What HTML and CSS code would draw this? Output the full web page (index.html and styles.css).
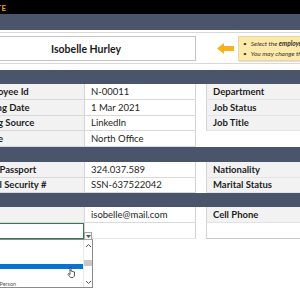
FILE: index.html
```html
<!DOCTYPE html>
<html>
<head>
<meta charset="utf-8">
<link rel="stylesheet" href="styles.css">
</head>
<body>
<div class="sheet">
  <div class="titlebar"><div class="title-wrap"><span class="title">EMPLOYEE PROFILE UPDATE</span></div></div>
  <div class="band band-1"></div>
  <div class="name-section">
    <div class="rule"></div>
    <div class="name-row">
      <div class="name-box">Isobelle Hurley</div>
      <svg class="arrow" width="17" height="11" viewBox="0 0 17 11"><path d="M0 5.5 L7 0 L7 3 L17 3 L17 8 L7 8 L7 11 Z" fill="#f7b21c"/></svg>
      <div class="note">
        <div class="note-line"><span class="bullet">•</span><span>Select the <b>employee</b> name from the list</span></div>
        <div class="note-line"><span class="bullet">•</span><span>You may change the details</span></div>
      </div>
    </div>
    <div class="rule rule-bottom"></div>
  </div>
  <div class="band band-2"></div>
  <div class="grid g1">
    <div class="lbl">Employee Id</div><div class="val">N-00011</div><div></div><div class="rlbl">Department</div>
    <div class="lbl">Joining Date</div><div class="val">1 Mar 2021</div><div></div><div class="rlbl">Job Status</div>
    <div class="lbl">Hiring Source</div><div class="val">LinkedIn</div><div></div><div class="rlbl">Job Title</div>
    <div class="lbl">Office</div><div class="val">North Office</div><div></div><div></div>
  </div>
  <div class="band band-3"></div>
  <div class="grid g2">
    <div class="lbl">Visa/Passport</div><div class="val">324.037.589</div><div></div><div class="rlbl">Nationality</div>
    <div class="lbl">Social Security #</div><div class="val">SSN-637522042</div><div></div><div class="rlbl">Marital Status</div>
  </div>
  <div class="band band-4"></div>
  <div class="grid g3">
    <div class="lbl">Email</div><div class="val">isobelle@mail.com</div><div></div><div class="rlbl">Cell Phone</div>
    <div class="sel">
      <div class="dd-btn"><svg width="5" height="3" viewBox="0 0 5 3"><path d="M0 0 H5 L2.5 3 Z" fill="#555"/></svg></div>
      <div class="dropdown">
        <div class="dd-items">
          <div class="item"></div>
          <div class="item"></div>
          <div class="item"></div>
          <div class="item active"></div>
          <div class="item"></div>
          <div class="item text">Contact Person</div>
        </div>
        <div class="scroll">
          <svg width="7" height="5" viewBox="0 0 7 5"><path d="M1 4 L3.5 1.5 L6 4" fill="none" stroke="#555" stroke-width="1"/></svg>
          <div class="thumb"></div>
          <svg width="7" height="5" viewBox="0 0 7 5"><path d="M1 1 L3.5 3.5 L6 1" fill="none" stroke="#555" stroke-width="1"/></svg>
        </div>
        <svg class="cursor" width="9" height="11" viewBox="0 0 9 11"><path d="M3 0.5 L4 0.5 L4 4 L7.5 5 L7.5 9 L6 10.5 L3.5 10.5 L1 7.5 L1.5 6.5 L3 7.5 Z" fill="#fff" stroke="#333" stroke-width="0.8"/></svg>
      </div>
    </div>
    <div class="val blank"></div><div></div><div class="rlbl blank"></div>
  </div>
</div>
</body>
</html>
```

FILE: styles.css
```css
html, body {
  margin: 0;
  padding: 0;
}
body {
  width: 300px;
  height: 300px;
  overflow: hidden;
  background: #fff;
  font-family: Lato, "Liberation Sans", sans-serif;
  color: #1e1e1e;
}
.sheet {
  margin-left: -40px;
  width: 340px;
  position: relative;
}
.titlebar {
  height: 14px;
  background: #000;
}
.title-wrap {
  width: 46px;
  height: 14px;
  display: flex;
  justify-content: flex-end;
  align-items: center;
  padding-top: 2px;
  box-sizing: border-box;
}
.title {
  white-space: nowrap;
  color: #e3a52b;
  font-weight: 700;
  font-size: 8px;
}
.band {
  background: #4a546a;
}
.band-1 { height: 16px; }
.band-2 { height: 14px; }
.band-3 { height: 15px; }
.band-4 { height: 14px; }
.name-section {
  height: 40px;
  padding-top: 2px;
  box-sizing: border-box;
}
.rule {
  height: 1px;
  background: #d8d8d8;
}
.rule-bottom {
  margin-top: 2px;
}
.name-row {
  display: flex;
  align-items: center;
  margin-top: 3px;
  height: 25px;
}
.name-box {
  flex: none;
  margin-left: 14px;
  width: 222px;
  height: 25px;
  box-sizing: border-box;
  border: 1px solid #c4c4c4;
  display: flex;
  justify-content: center;
  align-items: center;
  font-weight: 700;
  font-size: 10.5px;
  color: #1a1a1a;
  padding-left: 2px;
}
.arrow {
  margin-left: 21px;
  flex: none;
}
.note {
  margin-left: 4px;
  width: 120px;
  height: 25px;
  flex: none;
  box-sizing: border-box;
  background: #fdeaaa;
  border: 1px solid #e6d7a8;
  box-shadow: 1px 1px 1px rgba(0,0,0,0.12);
  display: flex;
  flex-direction: column;
  justify-content: center;
  gap: 3px;
  padding-left: 4px;
  font-size: 6.5px;
  font-style: italic;
  color: #333;
  white-space: nowrap;
}
.note-line {
  display: flex;
  gap: 4px;
}
.bullet {
  font-style: normal;
}
.grid {
  display: grid;
  grid-template-columns: 124px 112px 10px 94px;
  font-size: 9.5px;
}
.g1 { grid-auto-rows: 15.75px; }
.g2 { grid-auto-rows: 15.5px; }
.g3 { grid-auto-rows: 16px; }
.lbl {
  background: #f2f2f2;
  border-bottom: 1px solid #d9d9d9;
  font-weight: 700;
  padding-left: 17px;
  display: flex;
  align-items: center;
  white-space: nowrap;
  overflow: hidden;
}
.val {
  border-left: 1px solid #d4d4d4;
  border-right: 1px solid #d4d4d4;
  border-bottom: 1px solid #d9d9d9;
  padding-left: 6px;
  display: flex;
  align-items: center;
  white-space: nowrap;
}
.rlbl {
  background: #f2f2f2;
  border-left: 1px solid #d4d4d4;
  border-bottom: 1px solid #e4e4e4;
  padding-left: 6px;
  font-weight: 700;
  display: flex;
  align-items: center;
  white-space: nowrap;
}
.rlbl.blank {
  background: #fff;
  border-bottom: 1px solid #c8c8c8;
}
.val.blank {
  border-bottom: 1px solid #e8e8e8;
}
.sel {
  position: relative;
  border: 1px solid #2f7d4f;
  background: #fff;
}
.dd-btn {
  position: absolute;
  right: -9px;
  bottom: -2px;
  width: 8px;
  height: 8px;
  box-sizing: border-box;
  border: 1px solid #a6a6a6;
  background: #f4f4f4;
  display: flex;
  justify-content: center;
  align-items: center;
  z-index: 2;
}
.dropdown {
  position: absolute;
  left: -1px;
  top: 15px;
  width: 133px;
  height: 49px;
  box-sizing: border-box;
  border: 1px solid #8c8c8c;
  background: #fff;
  display: flex;
  z-index: 1;
}
.dd-items {
  flex: 1;
  display: flex;
  flex-direction: column;
  padding-top: 3px;
}
.item {
  height: 6.5px;
}
.item.active {
  background: #0a72d4;
  height: 6px;
  margin-top: 3px;
}
.item.text {
  margin-top: 6px;
  padding-left: 18px;
  font-size: 5.5px;
  color: #555;
  line-height: 6px;
  white-space: nowrap;
}
.scroll {
  width: 9px;
  border-left: 1px solid #eaeaea;
  display: flex;
  flex-direction: column;
  align-items: center;
  padding: 3px 0 2px;
  box-sizing: border-box;
}
.thumb {
  width: 8px;
  height: 6px;
  background: #c8c8c8;
  margin-top: 12px;
  margin-bottom: auto;
}
.cursor {
  position: absolute;
  left: 106px;
  top: 27px;
}
```
